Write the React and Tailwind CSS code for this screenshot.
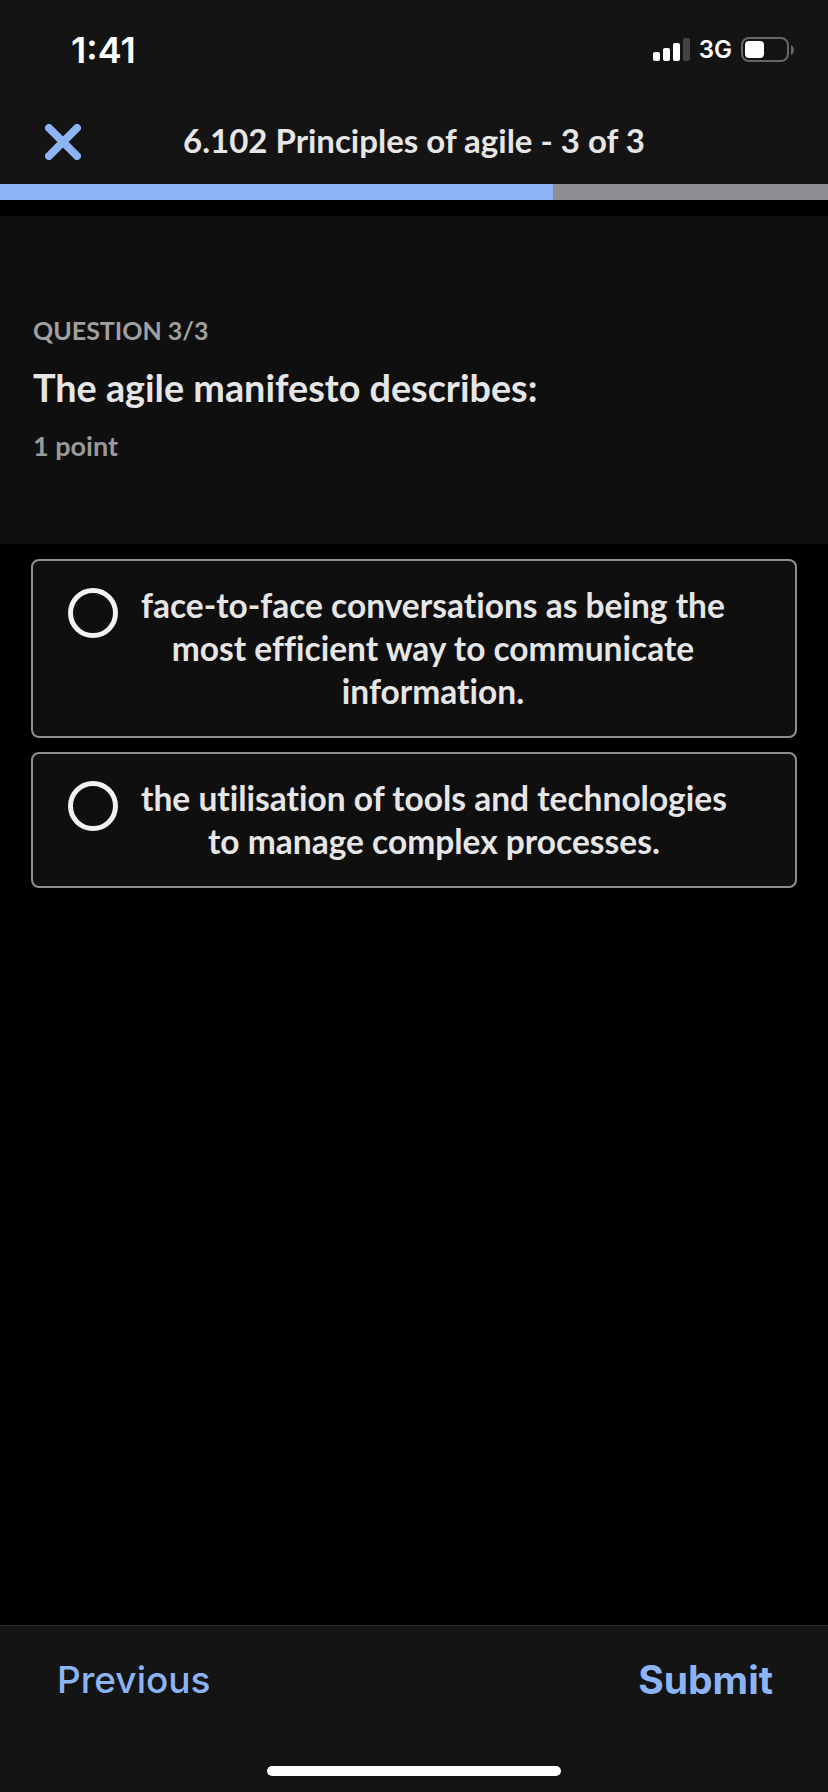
const SOURCE = { fontFamily: 'Lato, "Noto Sans", sans-serif' };
const SYSTEM = { fontFamily: 'Inter, "Liberation Sans", sans-serif' };

const OPTIONS = [
  {
    id: 'a',
    lines: [
      'face-to-face conversations as being the',
      'most efficient way to communicate',
      'information.',
    ],
  },
  {
    id: 'b',
    lines: ['the utilisation of tools and technologies', 'to manage complex processes.'],
  },
];

function StatusIcons() {
  return (
    <div className="flex items-center">
      <svg width="38" height="24" viewBox="0 0 38 24" className="block">
        <rect x="0" y="14" width="7" height="9" rx="2" fill="#fff" />
        <rect x="10" y="10" width="7" height="13" rx="2" fill="#fff" />
        <rect x="20" y="5" width="7" height="18" rx="2" fill="#fff" />
        <rect x="30" y="0" width="7" height="23" rx="2" fill="#444" />
      </svg>
      <span className="ml-[8px] text-[24px] font-semibold leading-none text-white" style={SYSTEM}>
        3G
      </span>
      <svg width="54" height="26" viewBox="0 0 54 26" className="ml-[9px] block">
        <rect x="1" y="1" width="46" height="23" rx="7" fill="none" stroke="#666" strokeWidth="2" />
        <rect x="4" y="4" width="19" height="17" rx="4" fill="#fff" />
        <path d="M50 8 C52 9 53 11 53 13 C53 15 52 17 50 18 Z" fill="#666" />
      </svg>
    </div>
  );
}

function OptionCard({ lines }) {
  return (
    <div className="flex items-start gap-[23px] rounded-lg border-2 border-[#8e8e93] bg-[#0f0f0f] pt-[23px] pb-[23px] pl-[35px]">
      <div className="mt-[4px] h-[50px] w-[50px] shrink-0 rounded-full border-[5px] border-[#f2f2f2]" />
      <p
        className="text-center text-[33.5px] font-bold leading-[43px] text-[#e6e6e6] [font-variant-ligatures:none]"
        style={SOURCE}
      >
        {lines.map((line) => (
          <span key={line} className="block whitespace-nowrap">
            {line}
          </span>
        ))}
      </p>
    </div>
  );
}

export default function App() {
  return (
    <div className="flex h-[1792px] w-[828px] flex-col overflow-hidden bg-black">
      <header className="bg-[#141414]">
        <div className="flex h-[100px] items-center justify-between pr-[33px] pl-[71px]">
          <span className="text-[36px] font-semibold leading-none text-white" style={SYSTEM}>
            1:41
          </span>
          <StatusIcons />
        </div>
        <div className="grid h-[84px] grid-cols-[1fr_auto_1fr] items-center">
          <svg width="36" height="36" viewBox="0 0 36 36" className="ml-[45px] block">
            <path d="M4 4 L32 32 M32 4 L4 32" stroke="#8cb4f5" strokeWidth="8" strokeLinecap="round" />
          </svg>
          <h1
            className="-mt-[4px] text-[33px] font-bold leading-none text-[#e6e6e6] [font-variant-ligatures:none]"
            style={SOURCE}
          >
            6.102 Principles of agile - 3 of 3
          </h1>
          <div />
        </div>
      </header>

      <div className="flex h-4 bg-[#8e8e93]">
        <div className="h-full w-[553px] bg-[#8cb4f5]" />
      </div>
      <div className="h-4 bg-black" />

      <section className="h-[328px] bg-[#0f0f0f] pt-[99px] pl-[33px] [font-variant-ligatures:none]" style={SOURCE}>
        <p className="text-[25px] font-bold leading-[30px] text-[#a0a0a0]">QUESTION 3/3</p>
        <h2 className="mt-[21px] text-[37.75px] font-bold leading-[44px] text-[#e6e6e6]">
          The agile manifesto describes:
        </h2>
        <p className="mt-[21px] text-[27px] font-bold leading-[30px] text-[#9a9a9a]">1 point</p>
      </section>

      <main className="flex flex-1 flex-col gap-[14px] px-[31px] pt-[15px]">
        {OPTIONS.map((option) => (
          <OptionCard key={option.id} lines={option.lines} />
        ))}
      </main>

      <footer className="flex h-[167px] flex-col border-t border-[#2c2c2e] bg-[#141414]">
        <div className="flex items-center justify-between pt-[29px] pr-[55px] pl-[57px]">
          <button className="text-[37px] font-medium leading-[50px] text-[#8cb4f5]" style={SYSTEM}>
            Previous
          </button>
          <button className="text-[39px] font-bold leading-[50px] text-[#8cb4f5]" style={SYSTEM}>
            Submit
          </button>
        </div>
        <div className="mx-auto mt-[61px] h-[10px] w-[294px] rounded-full bg-white" />
      </footer>
    </div>
  );
}
